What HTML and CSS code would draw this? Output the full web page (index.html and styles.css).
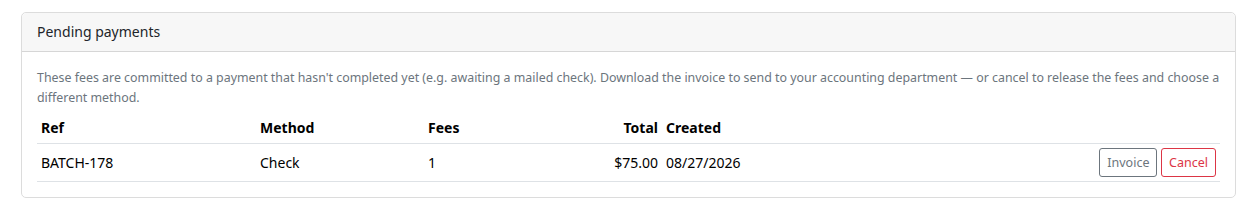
FILE: index.html
```html
<!DOCTYPE html>
<html lang="en">
<head>
    <meta charset="UTF-8">
    <meta name="viewport" content="width=device-width, initial-scale=1.0">
    <title>Pending payments</title>
    <link rel="stylesheet" href="styles.css">
</head>
<body>
    <div class="card">
        <div class="card-header">Pending payments</div>
        <div class="card-body">
            <p class="note">These fees are committed to a payment that hasn't completed yet (e.g. awaiting a mailed check). Download the invoice to send to your accounting department — or cancel to release the fees and choose a different method.</p>
            <table class="pending-table">
                <thead>
                    <tr>
                        <th class="col-ref">Ref</th>
                        <th class="col-method">Method</th>
                        <th class="col-fees">Fees</th>
                        <th class="col-total">Total</th>
                        <th class="col-created">Created</th>
                        <th class="col-actions"></th>
                    </tr>
                </thead>
                <tbody>
                    <tr>
                        <td>BATCH-178</td>
                        <td>Check</td>
                        <td>1</td>
                        <td class="col-total">$75.00</td>
                        <td>08/27/2026</td>
                        <td class="col-actions">
                            <button class="btn btn-invoice">Invoice</button>
                            <button class="btn btn-cancel">Cancel</button>
                        </td>
                    </tr>
                </tbody>
            </table>
        </div>
    </div>
</body>
</html>
```

FILE: styles.css
```css
body {
    font-family: 'Noto Sans', 'Open Sans', sans-serif;
    font-size: 14px;
    line-height: 1.5;
    color: #212529;
    margin: 0;
    padding: 12px 7px 0 21px;
    background-color: #fff;
}

.card {
    border: 1px solid #dcdcdc;
    border-radius: 5px;
    background-color: #fff;
}

.card-header {
    background-color: #f7f7f7;
    border-bottom: 1px solid #d6d6d6;
    border-radius: 5px 5px 0 0;
    padding: 8px 15px;
    font-size: 14px;
    line-height: 22px;
    color: #212529;
}

.card-body {
    padding: 16px 15px 15px 15px;
}

.note {
    margin: 0 0 5px 0;
    font-size: 12.4px;
    line-height: 20px;
    color: #6c757d;
}

.pending-table {
    width: 100%;
    border-collapse: collapse;
}

.pending-table th,
.pending-table td {
    padding: 4px;
    text-align: left;
    vertical-align: middle;
    border-bottom: 1px solid #dee2e6;
}

.pending-table th {
    font-weight: bold;
    line-height: 22px;
    color: #000;
}

.pending-table td { color: #000; }

.col-ref { width: 211px; }
.col-method { width: 160px; }
.col-fees { width: 148px; }
.pending-table .col-total { text-align: right; width: 74px; }
.col-created { width: 90px; }
.pending-table .col-actions { text-align: right; }

.btn {
    font-family: inherit;
    font-size: 12.5px;
    line-height: 21px;
    padding: 3px 7px;
    background-color: #fff;
    border-radius: 3px;
    cursor: pointer;
}

.btn-invoice {
    border: 1px solid #6c757d;
    color: #6c757d;
}

.btn-cancel {
    border: 1px solid #dc3545;
    color: #dc3545;
}
```
